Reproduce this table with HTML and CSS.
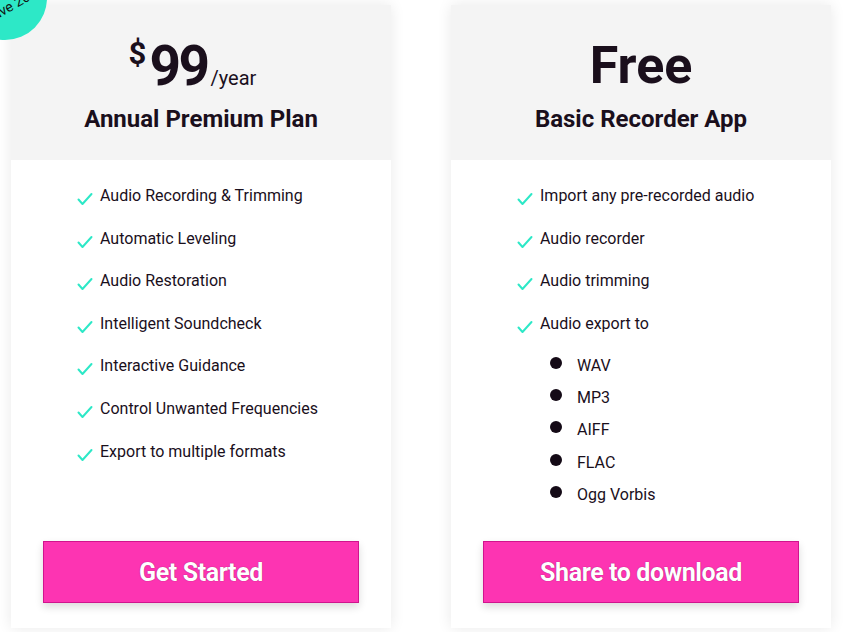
FILE: index.html
```html
<!DOCTYPE html>
<html lang="en">
<head>
<meta charset="utf-8">
<title>Pricing</title>
<link rel="stylesheet" href="styles.css">
</head>
<body>
<div class="plans">
  <section class="card">
    <div class="badge"><span class="badge-text">Save 20%</span></div>
    <header class="card-head">
      <div class="price price-paid"><span class="cur">$</span><span class="amount">99</span><span class="per">/year</span></div>
      <h2 class="plan-name">Annual Premium Plan</h2>
    </header>
    <div class="card-body">
      <ul class="features">
        <li><svg class="check" viewBox="0 0 16 14"><path d="M1.5 7.5 L5.5 12 L14.5 2"/></svg>Audio Recording &amp; Trimming</li>
        <li><svg class="check" viewBox="0 0 16 14"><path d="M1.5 7.5 L5.5 12 L14.5 2"/></svg>Automatic Leveling</li>
        <li><svg class="check" viewBox="0 0 16 14"><path d="M1.5 7.5 L5.5 12 L14.5 2"/></svg>Audio Restoration</li>
        <li><svg class="check" viewBox="0 0 16 14"><path d="M1.5 7.5 L5.5 12 L14.5 2"/></svg>Intelligent Soundcheck</li>
        <li><svg class="check" viewBox="0 0 16 14"><path d="M1.5 7.5 L5.5 12 L14.5 2"/></svg>Interactive Guidance</li>
        <li><svg class="check" viewBox="0 0 16 14"><path d="M1.5 7.5 L5.5 12 L14.5 2"/></svg>Control Unwanted Frequencies</li>
        <li><svg class="check" viewBox="0 0 16 14"><path d="M1.5 7.5 L5.5 12 L14.5 2"/></svg>Export to multiple formats</li>
      </ul>
      <a class="btn" href="#"><span class="btn-label">Get Started</span></a>
    </div>
  </section>

  <section class="card">
    <header class="card-head">
      <div class="price"><span class="amount free">Free</span></div>
      <h2 class="plan-name">Basic Recorder App</h2>
    </header>
    <div class="card-body">
      <ul class="features">
        <li><svg class="check" viewBox="0 0 16 14"><path d="M1.5 7.5 L5.5 12 L14.5 2"/></svg>Import any pre-recorded audio</li>
        <li><svg class="check" viewBox="0 0 16 14"><path d="M1.5 7.5 L5.5 12 L14.5 2"/></svg>Audio recorder</li>
        <li><svg class="check" viewBox="0 0 16 14"><path d="M1.5 7.5 L5.5 12 L14.5 2"/></svg>Audio trimming</li>
        <li class="has-sub">
          <div class="row"><svg class="check" viewBox="0 0 16 14"><path d="M1.5 7.5 L5.5 12 L14.5 2"/></svg>Audio export to</div>
          <ul class="formats">
            <li>WAV</li>
            <li>MP3</li>
            <li>AIFF</li>
            <li>FLAC</li>
            <li>Ogg Vorbis</li>
          </ul>
        </li>
      </ul>
      <a class="btn" href="#"><span class="btn-label">Share to download</span></a>
    </div>
  </section>
</div>
</body>
</html>
```

FILE: styles.css
```css
* { box-sizing: border-box; }

html, body {
  margin: 0;
  padding: 0;
  background: #ffffff;
  overflow: hidden;
}

body {
  font-family: Roboto, "Liberation Sans", Arial, sans-serif;
  color: #1a0f1c;
  width: 844px;
  height: 632px;
}

.plans {
  display: flex;
  gap: 60px;
  padding: 5px 13px 4px 11px;
  height: 632px;
}

.card {
  position: relative;
  width: 380px;
  display: flex;
  flex-direction: column;
  background: #ffffff;
  box-shadow: 0 0 14px rgba(0, 0, 0, 0.09);
}

.badge {
  position: absolute;
  left: -48px;
  top: -49px;
  width: 84px;
  height: 84px;
  border-radius: 50%;
  background: #2de8c7;
  z-index: 2;
}

.badge-text {
  position: absolute;
  left: 19px;
  top: 41px;
  font-size: 14px;
  white-space: nowrap;
  color: #111;
  transform: rotate(-30deg);
  transform-origin: 50% 50%;
}

.card-head {
  height: 155px;
  background: #f4f4f4;
  padding-top: 33px;
  text-align: center;
}

.price {
  height: 56px;
  line-height: 56px;
  display: flex;
  justify-content: center;
  align-items: baseline;
}

.price-paid {
  padding-right: 17px;
}

.cur {
  font-size: 31px;
  font-weight: 700;
  align-self: flex-start;
  line-height: 1;
  margin-top: 0;
  margin-right: 3px;
}

.amount {
  font-size: 55px;
  font-weight: 700;
  line-height: 56px;
  letter-spacing: -2.5px;
}

.amount.free {
  font-size: 52px;
  letter-spacing: 0;
}

.per {
  font-size: 20px;
  font-weight: 400;
  margin-left: 3px;
}

.plan-name {
  margin: 12px 0 0;
  font-size: 24px;
  font-weight: 700;
  line-height: 26px;
}

.card-body {
  flex: 1;
  display: flex;
  flex-direction: column;
  padding: 24px 32px 25px;
}

.features {
  list-style: none;
  margin: 0;
  padding: 0 0 0 34px;
  display: flex;
  flex-direction: column;
  gap: 18.6px;
  font-size: 16px;
  line-height: 24px;
}

.features > li,
.features .row {
  display: flex;
  align-items: flex-start;
}

.features > li.has-sub {
  display: block;
}

.check {
  width: 16px;
  height: 14px;
  flex: none;
  margin: 8px 7px 0 0;
  fill: none;
  stroke: #2de8c7;
  stroke-width: 2;
  stroke-linecap: round;
  stroke-linejoin: round;
}

.formats {
  list-style: none;
  margin: 18px 0 0;
  padding: 0 0 0 33px;
  display: flex;
  flex-direction: column;
  gap: 8.3px;
}

.formats li {
  display: flex;
  align-items: flex-start;
}

.formats li::before {
  content: "";
  width: 12px;
  height: 12px;
  border-radius: 50%;
  background: #140a16;
  margin: 3px 15px 0 0;
  flex: none;
}

.btn {
  margin-top: auto;
  height: 62px;
  display: flex;
  align-items: center;
  justify-content: center;
  background: #fd34b2;
  border: 1px solid #d0148e;
  box-shadow: 0 4px 8px rgba(0, 0, 0, 0.14);
  color: #ffffff;
  text-decoration: none;
  font-size: 25px;
  font-weight: 700;
}

.btn-label {
  display: inline-block;
  letter-spacing: -0.4px;
  text-shadow: 0 0 1px #8a0d5b;
}
```
